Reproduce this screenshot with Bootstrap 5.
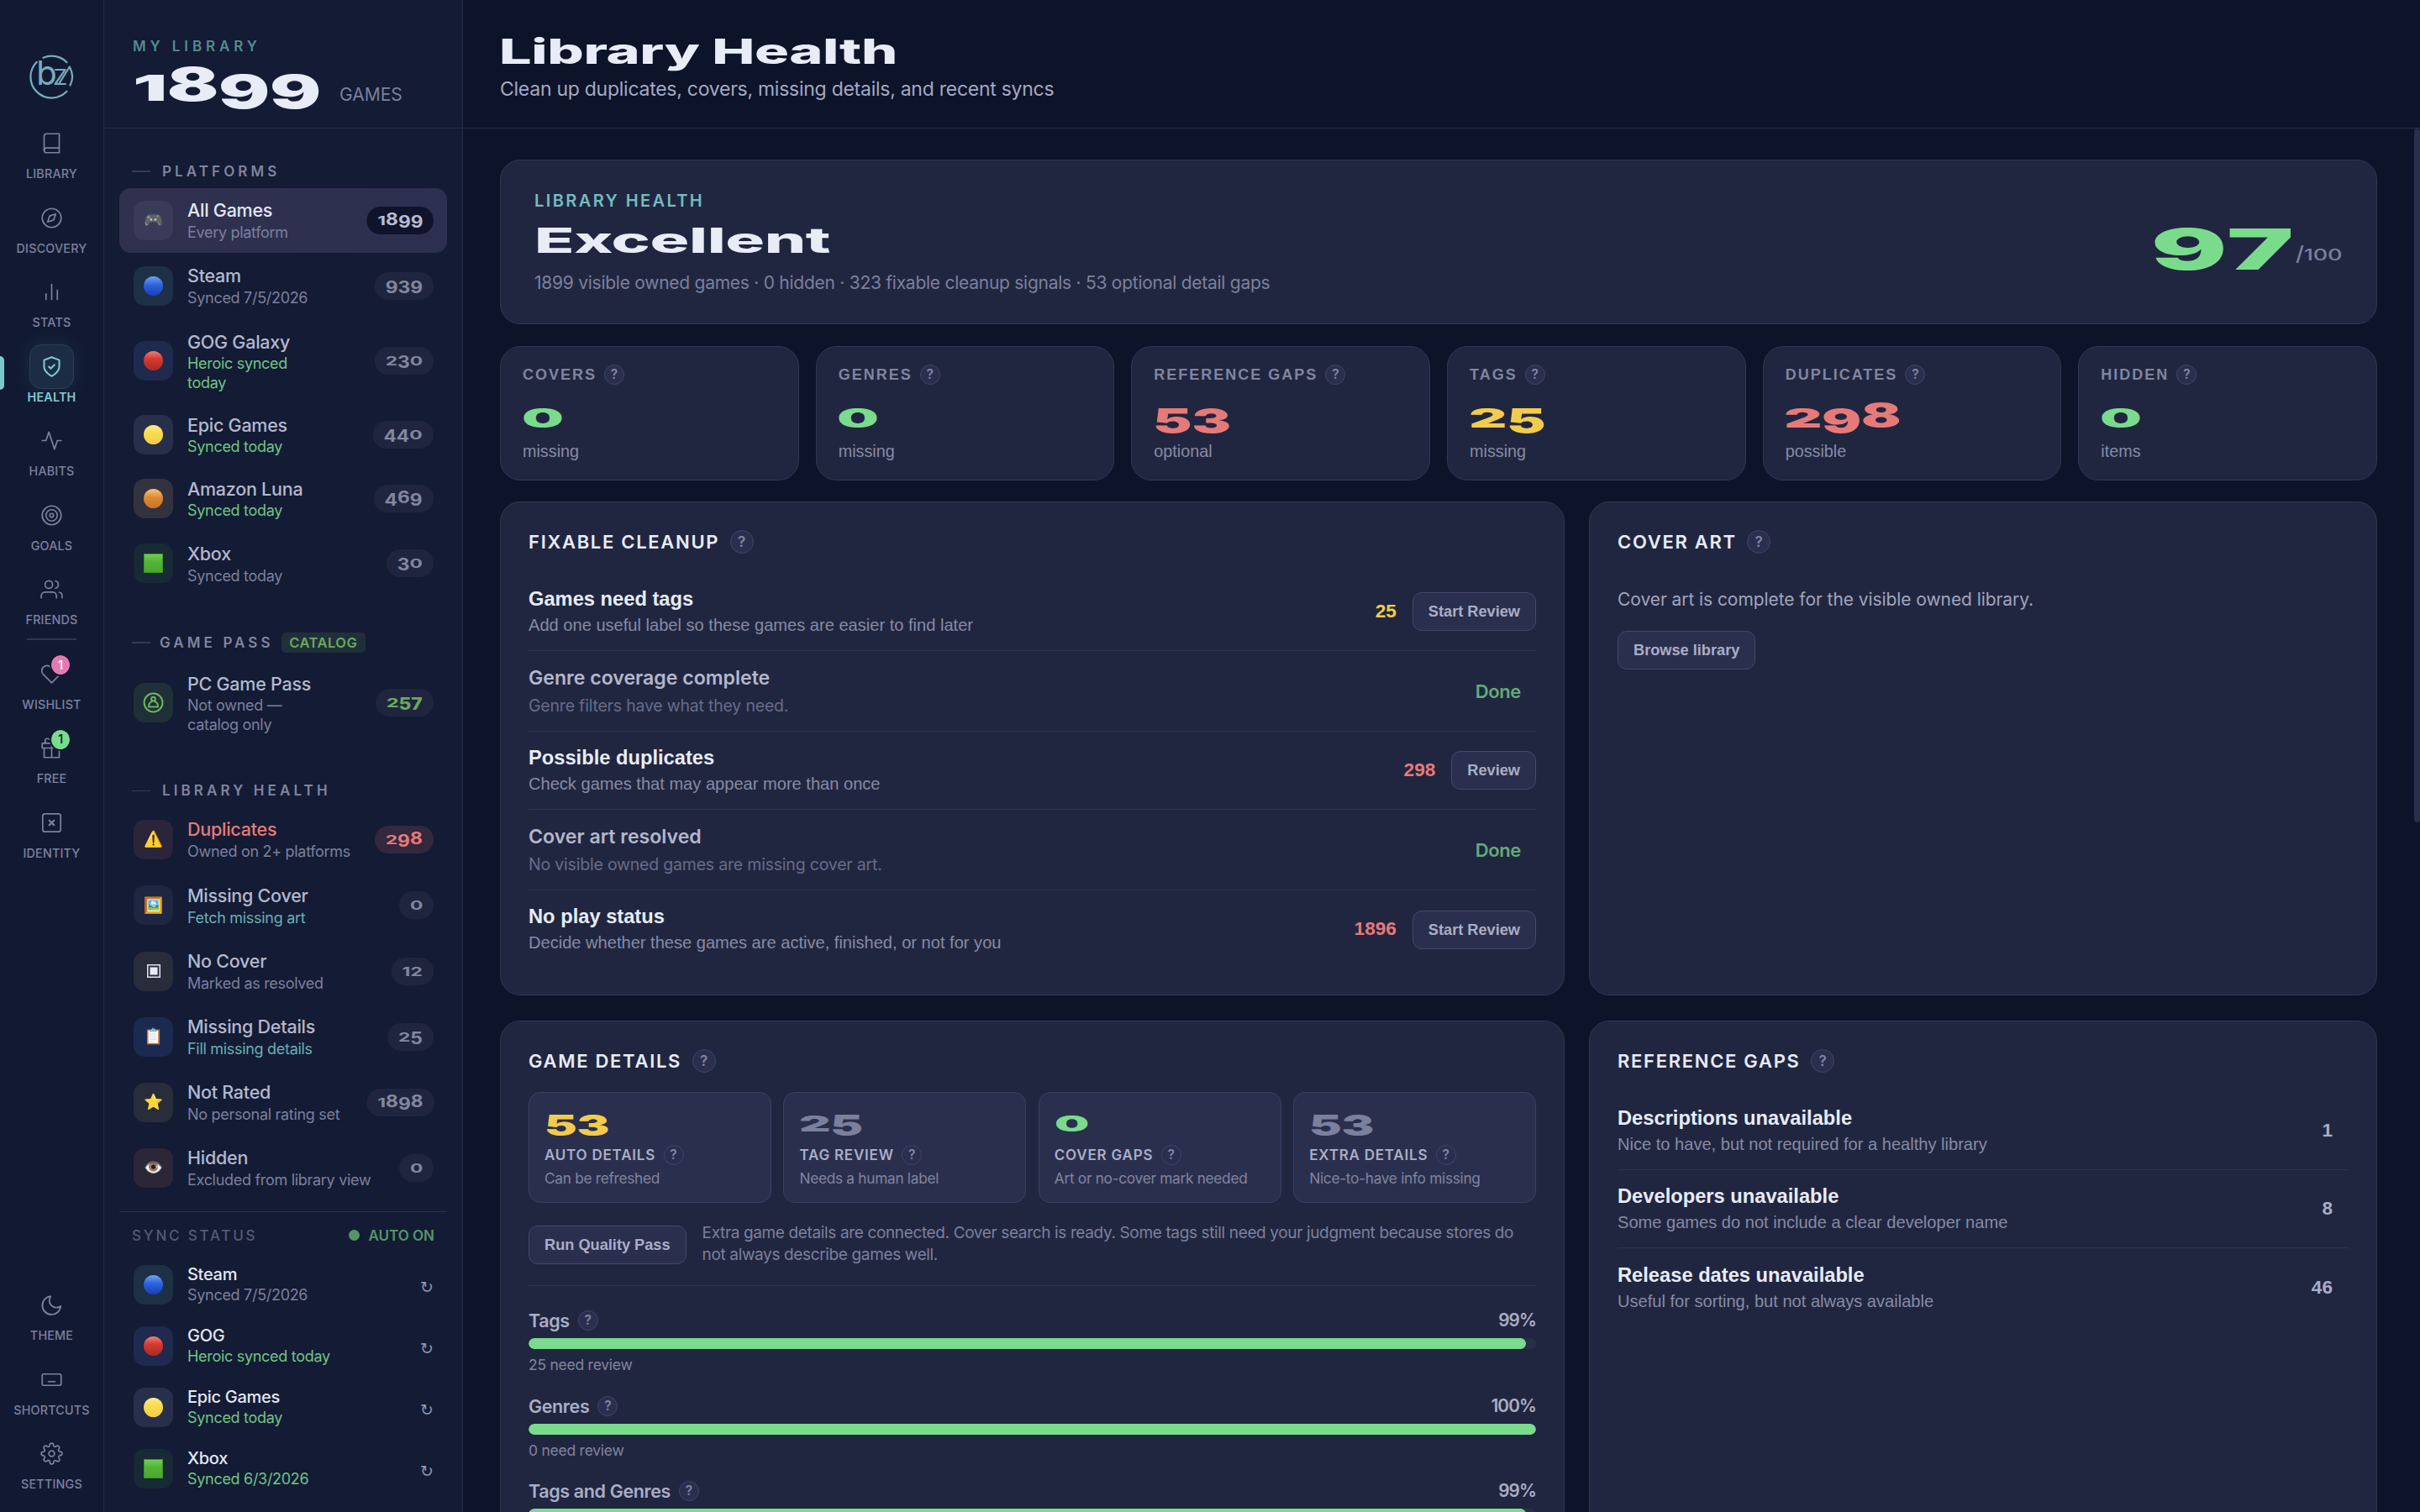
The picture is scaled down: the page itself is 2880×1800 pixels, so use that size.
<!doctype html>
<html lang="en" data-bs-theme="dark">
<head>
<meta charset="utf-8">
<meta name="viewport" content="width=device-width, initial-scale=1">
<title>Library Health</title>
<link href="https://cdn.jsdelivr.net/npm/bootstrap@5.3.0/dist/css/bootstrap.min.css" rel="stylesheet">
<style>
:root{--ink:#e7ecf7;--soft:#a9aec6;--dim:#7b809d;--teal:#73bcc0;--green:#7bdb8c;--yellow:#f3cc4b;--red:#e57a78;--line:#262c46;--cardline:#303653;--cardbg:#212640;--tile:#2b2f4e}
html,body{height:100%;overflow:hidden}
body{background:#0d1329;color:var(--soft);font-family:Inter,"Liberation Sans",sans-serif;font-size:20px;line-height:1.3;white-space:nowrap}
body .c-ink{color:var(--ink)}body .c-soft{color:var(--soft)}body .c-dim{color:var(--dim)}body .c-teal{color:#68b0b6}body .c-green{color:var(--green)}body .psub.c-green{color:#6fc684}body .c-yellow{color:var(--yellow)}body .c-red{color:var(--red)}

/* icon rail */
.rail{width:124px;background:#121a33;border-right:1px solid #242b46;padding:65px 0 23px}
.brand{width:53px;height:53px;margin-bottom:26.5px;color:#78adbd;overflow:visible;stroke-width:2.2}
.brand text{fill:currentColor;stroke:none;font-family:Inter,sans-serif}
.rail-group{gap:16px}
.rail-item{height:72.5px;color:#7c819e}
.rail-box{width:53px;height:53px;border-radius:14px;border:1px solid transparent}
.rail-box svg{width:27px;height:27px}
.rail-item span.cap{font-size:14.3px;font-weight:500;letter-spacing:.2px;line-height:20px}
.rail-item.active{color:#7fcdd1}
.rail-item.active .cap{font-weight:600!important}
.rail-item.active .rail-box{background:#1c2c44;border-color:#2a4054;box-shadow:0 0 22px rgba(90,180,190,.12)}
.rail-mark{left:0;top:14px;width:5px;height:40px;background:#7cc9cb;border-radius:0 6px 6px 0}
.rail-sep{width:59px;height:2px;background:#2f3550;margin:12px 0 14px}
.rail-badge{left:61px;top:4px;width:22px;height:23px;border-radius:50%;font-size:15px;font-weight:500;outline:2px solid #121a33}
svg{display:block;fill:none;stroke:currentColor;stroke-width:1.5;stroke-linecap:round;stroke-linejoin:round}

/* library sidebar */
.side{width:427px;background:#141b34;border-right:1px solid #262c47}
.side-head{height:153px;border-bottom:1px solid var(--line);padding:42px 0 0 34px}
.side-eyebrow{font-size:17px;font-weight:600;letter-spacing:4.9px;line-height:26px;color:#558a92}
.side-total{height:62px}
.side-total .num{width:246px}
.side-list{padding:0 18px 0 18px}
.sect{height:40px;padding-left:15px;font-size:17px;font-weight:600;letter-spacing:4.1px;color:#80859f}
.sect i{width:22px;height:1.5px;background:#343a57}
.tagchip{font-size:16.5px;font-weight:600;letter-spacing:.5px;color:#6aa85a;background:#20303a;border-radius:5px;padding:0 9.5px;height:24px;line-height:24px}
.plat{height:76.8px;margin-bottom:1.4px;border-radius:14px;padding:0 16px 0 17px}
.plat.on{background:linear-gradient(90deg,#30314f,#2c2f4f)}
.plat.tight{height:75px}.plat.tall{height:98px}.plat.taller{height:104px}
.ico{width:47px;height:47px;border-radius:13px;margin-right:17px;font-size:18.5px;line-height:1;font-family:"Noto Color Emoji",Inter,sans-serif}
.ptext{padding-top:1.5px}
.pname{font-size:21.5px;font-weight:500;letter-spacing:-.25px;line-height:27px;color:#b3b8cd}
.psub{font-size:18px;letter-spacing:-.3px;line-height:25px;color:#7b809d}
.tight .psub,.tall .psub,.taller .psub{line-height:23px}
.on .pname{color:#e3e7f4}
.ball{width:23px;height:23px;border-radius:50%}
.b-blue{background:linear-gradient(#6fa4f2,#2c62dc 45%,#1b3fb4)}
.b-red{background:linear-gradient(#ee8078,#d63a30 40%,#a92a22)}
.b-yellow{background:linear-gradient(#fdeb8c,#f8dc4e 40%,#f5cd45)}
.b-orange{background:linear-gradient(#f7c37c,#dd8a32 45%,#c87425)}
.b-green{background:linear-gradient(#72cf52,#52b538 40%,#4aa72f);width:23px;height:23px;border:1px solid #3f9427}
.k-slate{background:#393c58}.k-teal{background:#1d3046}.k-indigo{background:#20294e}.k-grey{background:#272f4b}.k-brown{background:#33323f}.k-forest{background:#182a35}
.k-moss{background:#1f3038;color:#6fb45c}.k-wine{background:#2b253b}.k-plain{background:#1f2641}.k-char{background:#292c3a;color:#dfe3f0}.k-navy{background:#1b2a50}.k-rust{background:#2b2739}
.k-moss svg{stroke-width:1.9}
.pill{height:33px;border-radius:14px/16.5px;padding:0 11px;background:#20253f;color:#82879f;font-size:19.5px;font-weight:700;line-height:30px;transform:scaleX(1.17);transform-origin:100% 50%}
.on .pill{background:#0f142c;color:#b7bbd2}
.pill.p-red{background:#33283e;color:var(--red)}.pill.p-green{color:#6aa85a;font-weight:800}
.syncbox{border-top:1px solid #2b314c;margin:11.5px 18px 0;padding-top:14px}
.synchead{font-size:17px;letter-spacing:2.8px;line-height:28px;color:#545a75;font-weight:500;padding:0 15px 0 15px}
.synchead .auto{color:#549567;font-weight:600;letter-spacing:0}
.synchead .dotx{width:13px;height:13px;border-radius:50%;background:#549567;margin-right:10px}
.sy{height:73.1px;padding:0 16px 0 17px}
.sy .ptext{padding-top:0}
.sy .pname{font-size:20px;letter-spacing:-.3px;line-height:26px;color:#e3e7f4}
.sy .psub{line-height:24px}
.redo{font-family:"DejaVu Sans",sans-serif;font-size:19px;line-height:20px;padding-top:6px;color:#8f94ae}

/* wide display face with old-style figures */
.wide{display:inline-block;font-weight:900;transform-origin:0 50%;transform:scaleX(1.65);letter-spacing:-.2px}
.wide.name{font-weight:800}
.fig{display:inline-block}
.fig-x{transform:scaleY(.77);transform-origin:50% var(--base,80%)}
.fig-d{transform:translateY(.16em)}

/* main column */
.topbar{height:153px;border-bottom:1px solid var(--line);padding:38px 0 0 43px}
.topbar .wide{font-size:41px;line-height:46px;transform:scaleX(1.665)}
.topbar p{font-size:23px;letter-spacing:-.26px;line-height:34px;margin:5px 0 0 1px;color:#a4a9c1}
.scroller{padding:37px 51px 0 44px}
.thumb{right:0;top:153px;width:7px;height:826px;background:#2a2d4c;border-radius:4px}
.surface{background:var(--cardbg);border:1px solid var(--cardline);border-radius:24px}
.hero{height:196px;padding:33px 42px 0 40px}
.hero .eyebrow{font-size:20px;font-weight:600;letter-spacing:2.4px;line-height:30px;color:var(--teal)}
.hero .wide.name{font-size:41px;line-height:50px;transform:scaleX(1.9)}
.hero .note{font-size:21px;letter-spacing:-.26px;line-height:32px;margin-top:10px;color:var(--dim)}
.score{height:128px;line-height:124px}
.score .big{width:172px;font-size:67px}
.score .big .wide{transform:scaleX(2);line-height:1}
.score .out{width:54px;font-size:24px}
.score .out .wide{font-weight:500;transform:scaleX(1.13);line-height:1}
.stats{gap:20px;margin:26px 0 24.5px}
.stat{flex:1 1 0;height:160px;padding:21px 0 0 26px}
.stat .lab{font:700 18px/24px "Liberation Sans",Arial,sans-serif;letter-spacing:2px;color:#80859f;gap:9px}
.stat .num{font-size:41px;line-height:44px;height:44px;margin:14px 0 0 -1.5px}
.stat .num .wide{transform:scaleX(1.71)}
.stat .sub{font:400 19.8px/28px "Liberation Sans",Arial,sans-serif;margin-top:7px;color:#868ba4}
.q{width:24px;height:24px;border-radius:50%;border:1px solid #40456a;background:#2b2f4e;color:#8186a3;font:600 15.5px/22px Inter,sans-serif;letter-spacing:0;text-align:center;flex:none}
.q.lg{width:28px;height:28px;font-size:17px;line-height:26px}
.panels{display:grid;grid-template-columns:1267px 1fr;gap:30px 29px}
.panel{padding:33px 33px 0}
.panel.p1{height:588.5px}
.panel.p2{height:700px}
.ptitle{font-size:22px;font-weight:600;letter-spacing:1.7px;line-height:28px;color:var(--ink);gap:12.5px}
.rowx{height:93px;border-bottom:1px solid #2d3350}
.rowx.done{height:96px}
.rowx.last{border-bottom:0}
.rowx .ptext{padding-top:1.5px}
.rowx .t{font:700 23.7px/32px "Liberation Sans",Arial,sans-serif;color:var(--ink)}
.rowx .s{font:400 20.08px/31px "Liberation Sans",Arial,sans-serif;color:#868ba4}
.rowx.done .t{font:600 23.1px/32px Inter,sans-serif;color:#b2b7cc;padding-top:1px}
.rowx.done .s{font:400 19.5px/32px Inter,sans-serif;letter-spacing:-.2px;color:#666c89;padding-top:1px}
.cnt{font:700 22.6px/30px "Liberation Sans",Arial,sans-serif;margin-right:19px}
.donex{font-size:22px;font-weight:600;letter-spacing:-.35px;color:#62ab78;margin-right:18px;padding-top:3px}
.btn-x{--bs-btn-padding-x:18px;--bs-btn-padding-y:0;--bs-btn-font-size:18.2px;--bs-btn-font-weight:700;--bs-btn-color:#a9aec6;--bs-btn-bg:#2b2f4e;--bs-btn-border-color:#434869;--bs-btn-border-radius:11px;font-family:"Liberation Sans",Arial,sans-serif;height:46px;line-height:44px;margin-top:1px}
.cover-note{font-size:21px;letter-spacing:-.07px;line-height:30px;color:#a0a5bd;margin:40px 0 21px}
.tiles{gap:14.6px;margin-top:23px}
.tilex{flex:1 1 0;height:132px;background:var(--tile);border:1px solid #3b4061;border-radius:14px;padding:16px 0 0 18px}
.tilex .num{font-size:34px;line-height:36px;height:36px}
.tilex .num .wide{transform:scaleX(1.71)}
.tilex .lab{font-size:17px;font-weight:600;letter-spacing:.78px;line-height:24px;margin-top:10px;color:#a9aec6;gap:9.5px}
.tilex .sub{font-size:17.3px;letter-spacing:-.3px;line-height:26px;margin-top:3px;color:#80859f}
.pass{height:99px;border-bottom:1px solid #303652;gap:19px}
.pass p{font-size:19px;letter-spacing:-.36px;line-height:26px;color:#7b809d;margin:0}
.meter{margin-bottom:21.6px}
.meter .lab{font-size:21.5px;font-weight:600;letter-spacing:-.37px;line-height:28px;gap:10px}
.meter .pct{font-size:20.8px;font-weight:600;letter-spacing:-.9px}
.meter .progress{--bs-progress-height:13px;--bs-progress-bg:#292d4a;--bs-progress-bar-bg:#7bdb8c;--bs-progress-border-radius:7px;margin:7px 0 6px}
.meter .progress-bar{border-radius:7px}
.meter .sub{font-size:17.5px;letter-spacing:-.25px;line-height:26px;color:#80859f}
</style>
<script src="https://cdn.jsdelivr.net/npm/bootstrap@5.3.0/dist/js/bootstrap.bundle.min.js"></script>
</head>
<body class="d-flex">

<nav class="rail d-flex flex-column align-items-center flex-shrink-0 vh-100">
  <svg class="brand" viewBox="0 0 53 53">
    <path d="M16.500 3.800A25 25 0 0 1 44.500 9.200"/><path d="M44.500 43.800A25 25 0 1 1 8.800 8.800"/>
    <path d="M35 35L47.800 14.500Q54 26 48.500 36.500"/>
    <text x="8.200" y="35.500" font-size="40" font-weight="400">b</text><text x="27.500" y="36" font-size="34" font-weight="300">z</text>
  </svg>
  <div class="rail-group d-flex flex-column w-100">
    <div class="rail-item d-flex flex-column align-items-center"><div class="rail-box d-flex align-items-center justify-content-center"><svg viewBox="0 0 24 24"><path d="M4 19.500A2.500 2.500 0 0 1 6.500 17H20"/><path d="M6.500 2H20v20H6.500A2.500 2.500 0 0 1 4 19.500v-15A2.500 2.500 0 0 1 6.500 2z"/></svg></div><span class="cap">LIBRARY</span></div>
    <div class="rail-item d-flex flex-column align-items-center"><div class="rail-box d-flex align-items-center justify-content-center"><svg viewBox="0 0 24 24"><circle cx="12" cy="12" r="10"/><path d="M16.240 7.760l-2.120 6.360-6.360 2.120 2.120-6.360z"/></svg></div><span class="cap">DISCOVERY</span></div>
    <div class="rail-item d-flex flex-column align-items-center"><div class="rail-box d-flex align-items-center justify-content-center"><svg viewBox="0 0 24 24"><path d="M18 20V10M12 20V4M6 20v-6"/></svg></div><span class="cap">STATS</span></div>
    <div class="rail-item active d-flex flex-column align-items-center position-relative"><span class="rail-mark position-absolute"></span><div class="rail-box d-flex align-items-center justify-content-center"><svg viewBox="0 0 24 24" style="stroke-width:1.800"><path d="M12 22s8-4 8-10V5l-8-3-8 3v7c0 6 8 10 8 10z"/><path d="M9 12l2 2 4-4"/></svg></div><span class="cap">HEALTH</span></div>
    <div class="rail-item d-flex flex-column align-items-center"><div class="rail-box d-flex align-items-center justify-content-center"><svg viewBox="0 0 24 24"><path d="M22 12h-4l-3 9L9 3l-3 9H2"/></svg></div><span class="cap">HABITS</span></div>
    <div class="rail-item d-flex flex-column align-items-center"><div class="rail-box d-flex align-items-center justify-content-center"><svg viewBox="0 0 24 24"><circle cx="12" cy="12" r="10"/><circle cx="12" cy="12" r="6"/><circle cx="12" cy="12" r="2"/></svg></div><span class="cap">GOALS</span></div>
    <div class="rail-item d-flex flex-column align-items-center"><div class="rail-box d-flex align-items-center justify-content-center"><svg viewBox="0 0 24 24"><path d="M17 21v-2a4 4 0 0 0-4-4H5a4 4 0 0 0-4 4v2"/><circle cx="9" cy="7" r="4"/><path d="M23 21v-2a4 4 0 0 0-3-3.870M16 3.130a4 4 0 0 1 0 7.750"/></svg></div><span class="cap">FRIENDS</span></div>
  </div>
  <div class="rail-sep"></div>
  <div class="rail-group d-flex flex-column w-100">
    <div class="rail-item d-flex flex-column align-items-center position-relative"><div class="rail-box d-flex align-items-center justify-content-center"><svg viewBox="0 0 24 24"><path d="M20.840 4.610a5.500 5.500 0 0 0-7.780 0L12 5.670l-1.060-1.060a5.500 5.500 0 0 0-7.780 7.780L12 21.230l8.840-8.840a5.500 5.500 0 0 0 0-7.780z"/></svg></div><span class="cap">WISHLIST</span><span class="rail-badge position-absolute d-flex align-items-center justify-content-center" style="background:#e57ab3;color:#fff">1</span></div>
    <div class="rail-item d-flex flex-column align-items-center position-relative"><div class="rail-box d-flex align-items-center justify-content-center"><svg viewBox="0 0 24 24"><path d="M20 12v10H4V12M2 7h20v5H2zM12 22V7M12 7H7.500a2.500 2.500 0 0 1 0-5C11 2 12 7 12 7zM12 7h4.500a2.500 2.500 0 0 0 0-5C13 2 12 7 12 7z"/></svg></div><span class="cap">FREE</span><span class="rail-badge position-absolute d-flex align-items-center justify-content-center" style="background:#7bdb8c;color:#10162c">1</span></div>
    <div class="rail-item d-flex flex-column align-items-center"><div class="rail-box d-flex align-items-center justify-content-center"><svg viewBox="0 0 24 24"><rect x="2.500" y="2.500" width="19" height="19" rx="2.500"/><path style="stroke-width:2" d="M9.500 9.500l5 5M14.500 9.500l-5 5"/></svg></div><span class="cap">IDENTITY</span></div>
  </div>
  <div class="rail-group d-flex flex-column w-100 mt-auto">
    <div class="rail-item d-flex flex-column align-items-center"><div class="rail-box d-flex align-items-center justify-content-center"><svg viewBox="0 0 24 24"><path d="M21 12.790A9 9 0 1 1 11.210 3 7 7 0 0 0 21 12.790z" transform="translate(-.6 .4) scale(1.080) translate(-.5 -.8)"/></svg></div><span class="cap">THEME</span></div>
    <div class="rail-item d-flex flex-column align-items-center"><div class="rail-box d-flex align-items-center justify-content-center"><svg viewBox="0 0 24 24"><rect x="2" y="6" width="20" height="12" rx="1.500"/><path d="M8.500 14h7"/></svg></div><span class="cap">SHORTCUTS</span></div>
    <div class="rail-item d-flex flex-column align-items-center"><div class="rail-box d-flex align-items-center justify-content-center"><svg viewBox="0 0 24 24"><circle cx="12" cy="12" r="3"/><path d="M19.400 15a1.650 1.650 0 0 0 .330 1.820l.060.060a2 2 0 1 1-2.830 2.830l-.060-.060a1.650 1.650 0 0 0-2.800 1.170V21a2 2 0 0 1-4 0v-.090A1.650 1.650 0 0 0 7.200 19.700l-.060.060a2 2 0 1 1-2.830-2.830l.060-.060a1.650 1.650 0 0 0-1.170-2.800H3a2 2 0 0 1 0-4h.090A1.650 1.650 0 0 0 4.300 7.200l-.060-.060a2 2 0 1 1 2.830-2.830l.060.060a1.650 1.650 0 0 0 2.800-1.170V3a2 2 0 0 1 4 0v.090a1.650 1.650 0 0 0 2.800 1.170l.060-.060a2 2 0 1 1 2.830 2.830l-.060.060a1.650 1.650 0 0 0 1.170 2.800H21a2 2 0 0 1 0 4h-.090a1.650 1.650 0 0 0-1.510 1z"/></svg></div><span class="cap">SETTINGS</span></div>
  </div>
</nav>

<aside class="side d-flex flex-column flex-shrink-0 vh-100 overflow-hidden">
  <div class="side-head">
    <div class="side-eyebrow">MY LIBRARY</div>
    <div class="side-total d-flex align-items-baseline"><div class="num c-ink" style="font-size:55px;line-height:64px"><span class="wide" data-figures>1899</span></div><span style="font-size:21px;line-height:30px;color:#7b809d">GAMES</span></div>
  </div>
  <div class="side-list" style="padding-top:31px">
    <div class="sect d-flex align-items-center"><i></i><span style="margin-left:14px">PLATFORMS</span></div>
    <div class="plat on d-flex align-items-center"><div class="ico k-slate d-flex align-items-center justify-content-center">🎮</div><div class="ptext me-auto"><div class="pname">All Games</div><div class="psub">Every platform</div></div><span class="pill" data-figures>1899</span></div>
    <div class="plat d-flex align-items-center"><div class="ico k-teal d-flex align-items-center justify-content-center"><i class="ball b-blue"></i></div><div class="ptext me-auto"><div class="pname">Steam</div><div class="psub">Synced 7/5/2026</div></div><span class="pill" data-figures>939</span></div>
    <div class="plat tall d-flex align-items-center"><div class="ico k-indigo d-flex align-items-center justify-content-center"><i class="ball b-red"></i></div><div class="ptext me-auto"><div class="pname">GOG Galaxy</div><div class="psub c-green">Heroic synced<br>today</div></div><span class="pill" data-figures>230</span></div>
    <div class="plat tight d-flex align-items-center"><div class="ico k-grey d-flex align-items-center justify-content-center"><i class="ball b-yellow"></i></div><div class="ptext me-auto"><div class="pname">Epic Games</div><div class="psub c-green">Synced today</div></div><span class="pill" data-figures>440</span></div>
    <div class="plat tight d-flex align-items-center"><div class="ico k-brown d-flex align-items-center justify-content-center"><i class="ball b-orange"></i></div><div class="ptext me-auto"><div class="pname">Amazon Luna</div><div class="psub c-green">Synced today</div></div><span class="pill" data-figures>469</span></div>
    <div class="plat d-flex align-items-center"><div class="ico k-forest d-flex align-items-center justify-content-center"><i class="b-green"></i></div><div class="ptext me-auto"><div class="pname">Xbox</div><div class="psub">Synced today</div></div><span class="pill" data-figures>30</span></div>
    <div class="sect d-flex align-items-center" style="margin-top:35.500px"><i></i><span style="margin-left:11px">GAME PASS</span><span class="tagchip" style="margin-left:9px">CATALOG</span></div>
    <div class="plat taller d-flex align-items-center"><div class="ico k-moss d-flex align-items-center justify-content-center"><svg width="25" height="25" viewBox="0 0 24 24"><circle cx="12" cy="12" r="10.500"/><circle cx="12" cy="7.800" r="2.300"/><path d="M10.500 10.500c-2 1-4 3.500-3.700 6.200h10.400c.300-2.700-1.700-5.200-3.700-6.200"/></svg></div><div class="ptext me-auto"><div class="pname">PC Game Pass</div><div class="psub">Not owned —<br>catalog only</div></div><span class="pill p-green" data-figures>257</span></div>
    <div class="sect d-flex align-items-center" style="margin-top:32.500px"><i></i><span style="margin-left:14px">LIBRARY HEALTH</span></div>
    <div class="plat d-flex align-items-center"><div class="ico k-wine d-flex align-items-center justify-content-center">⚠️</div><div class="ptext me-auto"><div class="pname c-red">Duplicates</div><div class="psub">Owned on 2+ platforms</div></div><span class="pill p-red" data-figures>298</span></div>
    <div class="plat d-flex align-items-center"><div class="ico k-plain d-flex align-items-center justify-content-center">🖼️</div><div class="ptext me-auto"><div class="pname">Missing Cover</div><div class="psub c-teal">Fetch missing art</div></div><span class="pill" data-figures>0</span></div>
    <div class="plat d-flex align-items-center"><div class="ico k-char d-flex align-items-center justify-content-center"><svg width="16" height="16" viewBox="0 0 16 16" style="stroke-linejoin:miter"><rect x=".750" y=".750" width="14.500" height="14.500"/><rect x="3.500" y="3.500" width="9" height="9" style="fill:#e7ecf7;stroke:none"/></svg></div><div class="ptext me-auto"><div class="pname">No Cover</div><div class="psub">Marked as resolved</div></div><span class="pill" data-figures>12</span></div>
    <div class="plat d-flex align-items-center"><div class="ico k-navy d-flex align-items-center justify-content-center">📋</div><div class="ptext me-auto"><div class="pname">Missing Details</div><div class="psub c-teal">Fill missing details</div></div><span class="pill" data-figures>25</span></div>
    <div class="plat d-flex align-items-center"><div class="ico k-char d-flex align-items-center justify-content-center">⭐</div><div class="ptext me-auto"><div class="pname">Not Rated</div><div class="psub">No personal rating set</div></div><span class="pill" data-figures>1898</span></div>
    <div class="plat d-flex align-items-center"><div class="ico k-rust d-flex align-items-center justify-content-center">👁️</div><div class="ptext me-auto"><div class="pname">Hidden</div><div class="psub">Excluded from library view</div></div><span class="pill" data-figures>0</span></div>
  </div>
  <div class="syncbox">
    <div class="synchead d-flex align-items-center"><span class="me-auto">SYNC STATUS</span><i class="dotx"></i><span class="auto">AUTO ON</span></div>
  </div>
  <div class="side-list" style="padding-top:7.500px">
    <div class="sy d-flex align-items-center"><div class="ico k-teal d-flex align-items-center justify-content-center"><i class="ball b-blue"></i></div><div class="ptext me-auto"><div class="pname">Steam</div><div class="psub">Synced 7/5/2026</div></div><span class="redo">↻</span></div>
    <div class="sy d-flex align-items-center"><div class="ico k-indigo d-flex align-items-center justify-content-center"><i class="ball b-red"></i></div><div class="ptext me-auto"><div class="pname">GOG</div><div class="psub c-green">Heroic synced today</div></div><span class="redo">↻</span></div>
    <div class="sy d-flex align-items-center"><div class="ico k-grey d-flex align-items-center justify-content-center"><i class="ball b-yellow"></i></div><div class="ptext me-auto"><div class="pname">Epic Games</div><div class="psub c-green">Synced today</div></div><span class="redo">↻</span></div>
    <div class="sy d-flex align-items-center"><div class="ico k-forest d-flex align-items-center justify-content-center"><i class="b-green"></i></div><div class="ptext me-auto"><div class="pname">Xbox</div><div class="psub c-green">Synced 6/3/2026</div></div><span class="redo">↻</span></div>
  </div>
</aside>

<main class="flex-grow-1 vh-100 overflow-hidden position-relative">
  <header class="topbar"><div class="d-flex"><span class="wide name c-ink">Library Health</span></div><p>Clean up duplicates, covers, missing details, and recent syncs</p></header>
  <div class="scroller">
    <section class="surface hero d-flex justify-content-between">
      <div><div class="eyebrow">LIBRARY HEALTH</div><div class="d-flex" style="margin-top:7px"><span class="wide name c-ink">Excellent</span></div><div class="note">1899 visible owned games · 0 hidden · 323 fixable cleanup signals · 53 optional detail gaps</div></div>
      <div class="score d-flex align-items-baseline"><div class="big c-green"><span class="wide" data-figures>97</span></div><div class="out c-dim"><span class="wide" data-figures>/100</span></div></div>
    </section>

    <section class="stats d-flex">
      <div class="surface stat"><div class="lab d-flex align-items-center">COVERS<span class="q">?</span></div><div class="num c-green"><span class="wide" data-figures>0</span></div><div class="sub">missing</div></div>
      <div class="surface stat"><div class="lab d-flex align-items-center">GENRES<span class="q">?</span></div><div class="num c-green"><span class="wide" data-figures>0</span></div><div class="sub">missing</div></div>
      <div class="surface stat"><div class="lab d-flex align-items-center">REFERENCE GAPS<span class="q">?</span></div><div class="num c-red"><span class="wide" data-figures>53</span></div><div class="sub">optional</div></div>
      <div class="surface stat"><div class="lab d-flex align-items-center">TAGS<span class="q">?</span></div><div class="num c-yellow"><span class="wide" data-figures>25</span></div><div class="sub">missing</div></div>
      <div class="surface stat"><div class="lab d-flex align-items-center">DUPLICATES<span class="q">?</span></div><div class="num c-red"><span class="wide" data-figures>298</span></div><div class="sub">possible</div></div>
      <div class="surface stat"><div class="lab d-flex align-items-center">HIDDEN<span class="q">?</span></div><div class="num c-green"><span class="wide" data-figures>0</span></div><div class="sub">items</div></div>
    </section>

    <section class="panels">
      <div class="surface panel p1">
        <div class="ptitle d-flex align-items-center">FIXABLE CLEANUP<span class="q lg">?</span></div>
        <div style="margin-top:23px">
          <div class="rowx d-flex align-items-center"><div class="ptext me-auto"><div class="t">Games need tags</div><div class="s">Add one useful label so these games are easier to find later</div></div><span class="cnt c-yellow">25</span><button class="btn btn-x">Start Review</button></div>
          <div class="rowx done d-flex align-items-center"><div class="ptext me-auto"><div class="t">Genre coverage complete</div><div class="s">Genre filters have what they need.</div></div><span class="donex">Done</span></div>
          <div class="rowx d-flex align-items-center"><div class="ptext me-auto"><div class="t">Possible duplicates</div><div class="s">Check games that may appear more than once</div></div><span class="cnt c-red">298</span><button class="btn btn-x">Review</button></div>
          <div class="rowx done d-flex align-items-center"><div class="ptext me-auto"><div class="t">Cover art resolved</div><div class="s">No visible owned games are missing cover art.</div></div><span class="donex">Done</span></div>
          <div class="rowx last d-flex align-items-center"><div class="ptext me-auto"><div class="t">No play status</div><div class="s">Decide whether these games are active, finished, or not for you</div></div><span class="cnt c-red">1896</span><button class="btn btn-x">Start Review</button></div>
        </div>
      </div>
      <div class="surface panel p1">
        <div class="ptitle d-flex align-items-center">COVER ART<span class="q lg">?</span></div>
        <p class="cover-note">Cover art is complete for the visible owned library.</p>
        <button class="btn btn-x">Browse library</button>
      </div>
      <div class="surface panel p2">
        <div class="ptitle d-flex align-items-center">GAME DETAILS<span class="q lg">?</span></div>
        <div class="tiles d-flex">
          <div class="tilex"><div class="num c-yellow"><span class="wide" data-figures>53</span></div><div class="lab d-flex align-items-center">AUTO DETAILS<span class="q">?</span></div><div class="sub">Can be refreshed</div></div>
          <div class="tilex"><div class="num c-dim"><span class="wide" data-figures>25</span></div><div class="lab d-flex align-items-center">TAG REVIEW<span class="q">?</span></div><div class="sub">Needs a human label</div></div>
          <div class="tilex"><div class="num c-green"><span class="wide" data-figures>0</span></div><div class="lab d-flex align-items-center">COVER GAPS<span class="q">?</span></div><div class="sub">Art or no-cover mark needed</div></div>
          <div class="tilex"><div class="num c-dim"><span class="wide" data-figures>53</span></div><div class="lab d-flex align-items-center">EXTRA DETAILS<span class="q">?</span></div><div class="sub">Nice-to-have info missing</div></div>
        </div>
        <div class="pass d-flex align-items-center"><button class="btn btn-x">Run Quality Pass</button><p>Extra game details are connected. Cover search is ready. Some tags still need your judgment because stores do<br>not always describe games well.</p></div>
        <div style="margin-top:27px">
          <div class="meter"><div class="lab d-flex align-items-center">Tags<span class="q">?</span><span class="pct ms-auto">99%</span></div><div class="progress"><div class="progress-bar" style="width:99%"></div></div><div class="sub">25 need review</div></div>
          <div class="meter"><div class="lab d-flex align-items-center">Genres<span class="q">?</span><span class="pct ms-auto">100%</span></div><div class="progress"><div class="progress-bar" style="width:100%"></div></div><div class="sub">0 need review</div></div>
          <div class="meter"><div class="lab d-flex align-items-center">Tags and Genres<span class="q">?</span><span class="pct ms-auto">99%</span></div><div class="progress"><div class="progress-bar" style="width:99%"></div></div></div>
        </div>
      </div>
      <div class="surface panel p2">
        <div class="ptitle d-flex align-items-center">REFERENCE GAPS<span class="q lg">?</span></div>
        <div style="margin-top:23px">
          <div class="rowx d-flex align-items-center"><div class="ptext me-auto"><div class="t">Descriptions unavailable</div><div class="s">Nice to have, but not required for a healthy library</div></div><span class="cnt c-soft">1</span></div>
          <div class="rowx d-flex align-items-center"><div class="ptext me-auto"><div class="t">Developers unavailable</div><div class="s">Some games do not include a clear developer name</div></div><span class="cnt c-soft">8</span></div>
          <div class="rowx last d-flex align-items-center"><div class="ptext me-auto"><div class="t">Release dates unavailable</div><div class="s">Useful for sorting, but not always available</div></div><span class="cnt c-soft">46</span></div>
        </div>
      </div>
    </section>
  </div>
  <div class="thumb position-absolute"></div>
</main>

<script>
// Old-style figures: 0-2 sit at x-height, 3 4 5 7 9 hang below the baseline.
document.querySelectorAll('[data-figures]').forEach(el => {
  const digits = [...el.textContent];
  el.textContent = '';
  digits.forEach(d => {
    const s = document.createElement('span');
    s.className = 'fig ' + ('012'.includes(d) ? 'fig-x' : '34579'.includes(d) ? 'fig-d' : '');
    s.textContent = d;
    el.append(s);
    // scale from the baseline, whatever the line height of the box
    const fs = parseFloat(getComputedStyle(s).fontSize), h = s.offsetHeight;
    s.style.setProperty('--base', (h / 2 + fs * 0.364) + 'px');
  });
});
</script>
</body>
</html>
